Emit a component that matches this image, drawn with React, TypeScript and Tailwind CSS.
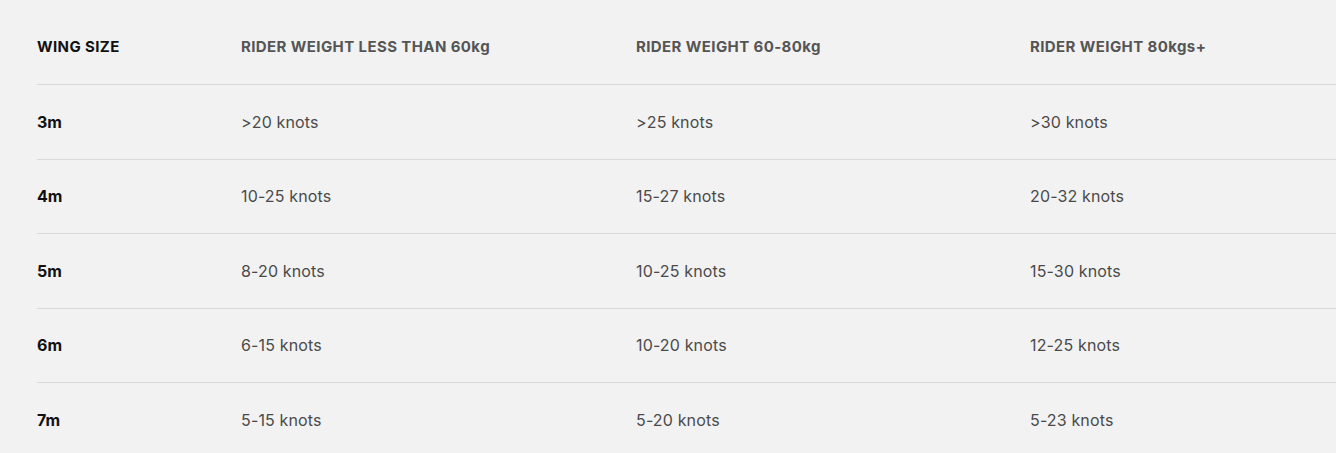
import React from 'react';

const headers = [
  'WING SIZE',
  'RIDER WEIGHT LESS THAN 60kg',
  'RIDER WEIGHT 60-80kg',
  'RIDER WEIGHT 80kgs+',
];

const rows = [
  ['3m', '>20 knots', '>25 knots', '>30 knots'],
  ['4m', '10-25 knots', '15-27 knots', '20-32 knots'],
  ['5m', '8-20 knots', '10-25 knots', '15-30 knots'],
  ['6m', '6-15 knots', '10-20 knots', '12-25 knots'],
  ['7m', '5-15 knots', '5-20 knots', '5-23 knots'],
];

const cols = 'grid grid-cols-[204px_395px_394px_394px]';

export default function App() {
  return (
    <div
      className="w-[1336px] h-[453px] overflow-hidden bg-[#f2f2f2] pl-[37px] pt-[11px]"
      style={{ fontFamily: 'Inter, "Open Sans", sans-serif' }}
    >
      <div className="w-[1387px]">
        {/* Header */}
        <div className={`${cols} h-[74px] items-center border-b border-[#d9d9d9]`}>
          {headers.map((h, i) => (
            <div
              key={h}
              className={`text-[15px] font-bold tracking-[0.4px] ${
                i === 0 ? 'text-[#111]' : 'text-[#555]'
              }`}
            >
              {h}
            </div>
          ))}
        </div>

        {/* Rows */}
        {rows.map((r) => (
          <div
            key={r[0]}
            className={`${cols} h-[74.5px] items-center border-b border-[#d9d9d9]`}
          >
            {r.map((c, i) => (
              <div
                key={i}
                className={
                  i === 0
                    ? 'text-[16px] font-bold text-[#111]'
                    : 'text-[16px] tracking-[0.15px] text-[#4a4a4a]'
                }
              >
                {c}
              </div>
            ))}
          </div>
        ))}
      </div>
    </div>
  );
}
